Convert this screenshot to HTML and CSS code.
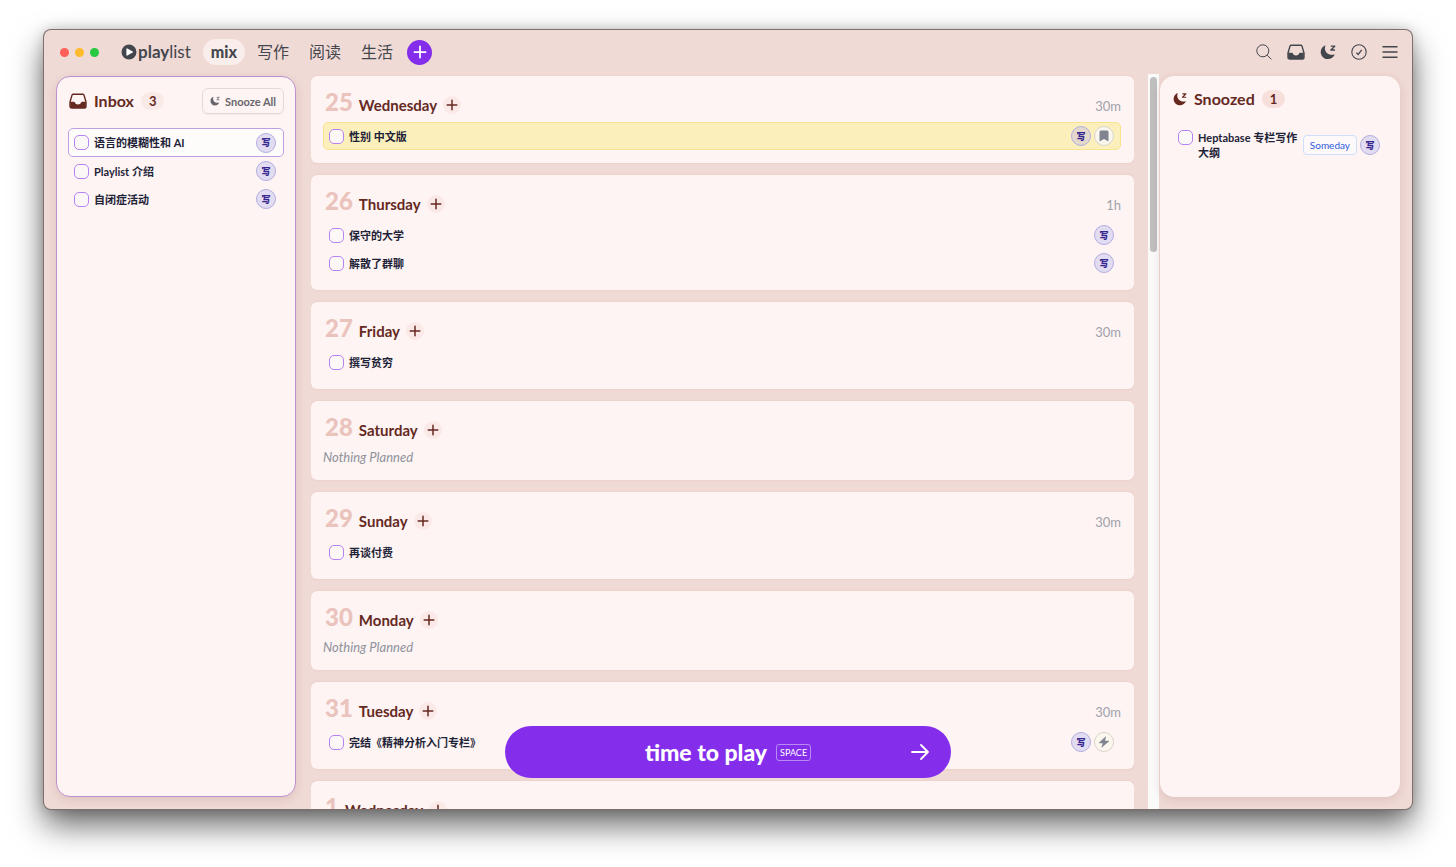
FILE: index.html
```
<!DOCTYPE html>
<html lang="en">
<head>
    <meta charset="UTF-8">
    <meta name="viewport" content="width=device-width, initial-scale=1.0">
    <title>playlist</title>
    <link rel="stylesheet" href="styles.css">
</head>
<body>
    <!-- shared icons -->
    <svg class="sprite" aria-hidden="true">
        <symbol id="i-plus" viewBox="0 0 12 12"><path d="M6 1.200v9.600M1.200 6h9.600" fill="none" stroke="currentColor" stroke-width="1.5" stroke-linecap="round"/></symbol>
        <symbol id="i-inbox" viewBox="0 0 18 16"><path d="M4.2 1.2h9.6c.6 0 1 .3 1.2.9L17 9v4.2c0 1-.7 1.8-1.8 1.8H2.8c-1.1 0-1.8-.8-1.8-1.8V9L3 2.1c.2-.6.6-.9 1.2-.9z" fill="none" stroke="currentColor" stroke-width="1.4" stroke-linejoin="round"/><path d="M1.200 8.800h3.600c.6 0 .9.3 1.100.8.4 1.200 1.500 2 3.100 2s2.700-.8 3.100-2c.2-.5.500-.8 1.100-.8h3.600v4.400c0 1-.6 1.800-1.600 1.800H2.800c-1 0-1.600-.8-1.600-1.800z" fill="currentColor"/></symbol>
        <symbol id="i-moon" viewBox="0 0 16 16"><path d="M5.600 1.200C2.800 2.100.7 4.700.7 7.900c0 4 3.200 7.200 7.200 7.200 3.200 0 5.900-2 6.900-4.900-1 .4-2 .6-3 .6-3.900 0-6.900-2.900-6.900-6.600 0-1 .2-2.100.7-3z" fill="currentColor"/><path d="M10.800 2.200h4l-4 3.800h4.200" fill="none" stroke="currentColor" stroke-width="1.300" stroke-linejoin="round"/></symbol>
        <symbol id="i-bookmark" viewBox="0 0 12 12"><path d="M1.500 2c0-.9.6-1.500 1.500-1.500h6c.9 0 1.500.6 1.500 1.500v9.500L6 9l-4.500 2.500z" fill="currentColor"/></symbol>
        <symbol id="i-bolt" viewBox="0 0 12 12"><path d="M7.600.4L1.200 6.600c-.3.3-.1.700.3.700h3.300l-1.400 4.100c-.1.300.2.400.4.200l7-6.200c.3-.3.1-.7-.3-.7H7L8 .7c.1-.3-.2-.5-.4-.3z" fill="currentColor"/></symbol>
    </svg>

    <div class="app">
        <header class="topbar">
            <div class="dots"><span class="dot red"></span><span class="dot amber"></span><span class="dot green"></span></div>
            <div class="logo">
                <svg class="logo-mark" viewBox="0 0 16 16"><circle cx="8" cy="8" r="7.500" fill="currentColor"/><path d="M6 4.900v6.200L11.400 8z" fill="#fff" stroke="#fff" stroke-width="1.200" stroke-linejoin="round"/></svg><span><b>play</b>list</span>
            </div>
            <nav class="tabs">
                <a href="#" class="tab active">mix</a>
                <a href="#" class="tab">写作</a>
                <a href="#" class="tab">阅读</a>
                <a href="#" class="tab">生活</a>
            </nav>
            <button class="new-list" aria-label="New playlist"><svg class="icon-14"><use href="#i-plus"/></svg></button>
            <div class="tools">
                <button aria-label="Search"><svg viewBox="0 0 16 16"><circle cx="6.800" cy="6.800" r="6" fill="none" stroke="currentColor"/><path d="M11.200 11.200l4.200 4.200" stroke="currentColor"/></svg></button>
                <button aria-label="Inbox"><svg class="wide"><use href="#i-inbox"/></svg></button>
                <button aria-label="Snoozed"><svg><use href="#i-moon"/></svg></button>
                <button aria-label="Completed"><svg viewBox="0 0 16 16"><circle cx="8" cy="8" r="7.200" fill="none" stroke="currentColor" stroke-width="1.100"/><path d="M5.300 8.600l1.900 1.900 3.500-4.700" fill="none" stroke="currentColor" stroke-width="1.300"/></svg></button>
                <button aria-label="Menu"><svg viewBox="0 0 16 16"><path d="M.5 2.700h15M.5 8h15M.5 13.300h15" stroke="currentColor" stroke-width="1.400"/></svg></button>
            </div>
        </header>

        <main class="columns">
            <!-- inbox -->
            <section class="panel inbox">
                <div class="panel-head">
                    <svg class="panel-icon wide"><use href="#i-inbox"/></svg>
                    <h2>Inbox</h2>
                    <span class="count">3</span>
                    <button class="snooze-all"><svg><use href="#i-moon"/></svg>Snooze All</button>
                </div>
                <div class="task selected">
                    <label><input type="checkbox"><span>语言的模糊性和 AI</span></label>
                    <span class="badge">写</span>
                </div>
                <div class="task">
                    <label><input type="checkbox"><span>Playlist 介绍</span></label>
                    <span class="badge">写</span>
                </div>
                <div class="task">
                    <label><input type="checkbox"><span>自闭症活动</span></label>
                    <span class="badge">写</span>
                </div>
            </section>

            <!-- days -->
            <section class="days">
                <article class="day">
                    <div class="day-head"><span class="num">25</span><h3>Wednesday</h3><button class="add" aria-label="Add task"><svg class="icon-12"><use href="#i-plus"/></svg></button><span class="total">30m</span></div>
                    <div class="task marked">
                        <label><input type="checkbox"><span>性别 中文版</span></label>
                        <span class="badge tan">写</span>
                        <span class="badge plain"><svg><use href="#i-bookmark"/></svg></span>
                    </div>
                </article>
                <article class="day">
                    <div class="day-head"><span class="num">26</span><h3>Thursday</h3><button class="add" aria-label="Add task"><svg class="icon-12"><use href="#i-plus"/></svg></button><span class="total">1h</span></div>
                    <div class="task">
                        <label><input type="checkbox"><span>保守的大学</span></label>
                        <span class="badge">写</span>
                    </div>
                    <div class="task">
                        <label><input type="checkbox"><span>解散了群聊</span></label>
                        <span class="badge">写</span>
                    </div>
                </article>
                <article class="day">
                    <div class="day-head"><span class="num">27</span><h3>Friday</h3><button class="add" aria-label="Add task"><svg class="icon-12"><use href="#i-plus"/></svg></button><span class="total">30m</span></div>
                    <div class="task">
                        <label><input type="checkbox"><span>撰写贫穷</span></label>
                    </div>
                </article>
                <article class="day">
                    <div class="day-head"><span class="num">28</span><h3>Saturday</h3><button class="add" aria-label="Add task"><svg class="icon-12"><use href="#i-plus"/></svg></button></div>
                    <p class="nothing">Nothing Planned</p>
                </article>
                <article class="day">
                    <div class="day-head"><span class="num">29</span><h3>Sunday</h3><button class="add" aria-label="Add task"><svg class="icon-12"><use href="#i-plus"/></svg></button><span class="total">30m</span></div>
                    <div class="task">
                        <label><input type="checkbox"><span>再谈付费</span></label>
                    </div>
                </article>
                <article class="day">
                    <div class="day-head"><span class="num">30</span><h3>Monday</h3><button class="add" aria-label="Add task"><svg class="icon-12"><use href="#i-plus"/></svg></button></div>
                    <p class="nothing">Nothing Planned</p>
                </article>
                <article class="day">
                    <div class="day-head"><span class="num">31</span><h3>Tuesday</h3><button class="add" aria-label="Add task"><svg class="icon-12"><use href="#i-plus"/></svg></button><span class="total">30m</span></div>
                    <div class="task">
                        <label><input type="checkbox"><span>完结《精神分析入门专栏》</span></label>
                        <span class="badge">写</span>
                        <span class="badge plain"><svg><use href="#i-bolt"/></svg></span>
                    </div>
                </article>
                <article class="day">
                    <div class="day-head"><span class="num">1</span><h3>Wednesday</h3><button class="add" aria-label="Add task"><svg class="icon-12"><use href="#i-plus"/></svg></button></div>
                </article>
            </section>

            <div class="scroll-track"><div class="scroll-thumb"></div></div>

            <!-- snoozed -->
            <section class="panel snoozed">
                <div class="panel-head">
                    <svg class="panel-icon"><use href="#i-moon"/></svg>
                    <h2>Snoozed</h2>
                    <span class="count strong">1</span>
                </div>
                <div class="task tall">
                    <label><input type="checkbox"><span>Heptabase 专栏写作大纲</span></label>
                    <span class="someday">Someday</span>
                    <span class="badge">写</span>
                </div>
            </section>
        </main>

        <button class="play">
            <span class="play-label">time to play</span>
            <kbd>SPACE</kbd>
            <svg class="arrow" viewBox="0 0 18 18"><path d="M1 9h16M10 2l7 7-7 7" fill="none" stroke="currentColor" stroke-width="1.800" stroke-linecap="round" stroke-linejoin="round"/></svg>
        </button>
    </div>
</body>
</html>
```
FILE: styles.css
```
* {
    box-sizing: border-box;
}

body {
    margin: 0;
    background: #fff;
    color: #1f2338;
    font-family: Lato, "Noto Sans CJK SC", sans-serif;
    font-size: 11px;
    overflow: hidden;
}

button {
    font-family: inherit;
    border: 0;
    padding: 0;
    background: none;
    color: inherit;
    cursor: pointer;
}

h2,
h3,
p {
    margin: 0;
}

svg {
    display: block;
    width: 16px;
    height: 16px;
    flex: none;
}

svg.wide {
    width: 18px;
}

svg.icon-12 {
    width: 12px;
    height: 12px;
}

svg.icon-14 {
    width: 14px;
    height: 14px;
}

svg.sprite {
    position: absolute;
    width: 0;
    height: 0;
}

/* window */
.app {
    position: relative;
    display: flex;
    flex-direction: column;
    height: calc(100vh - 88px);
    margin: 30px 44px 58px;
    background: #f0dad6;
    border-radius: 7px;
    overflow: hidden;
    box-shadow: 0 0 0 1px #7c706e, 0 16px 32px rgba(0, 0, 0, 0.6), 0 0 14px rgba(0, 0, 0, 0.2);
}

/* top bar */
.topbar {
    display: flex;
    align-items: center;
    flex: none;
    height: 44px;
    padding: 0 14px 0 16px;
    color: #44464d;
}

.dots {
    display: flex;
    gap: 6px;
}

.dot {
    width: 9px;
    height: 9px;
    border-radius: 50%;
}

.red {
    background: #fe5f57;
}

.amber {
    background: #febb2e;
}

.green {
    background: #28c840;
}

.logo {
    display: flex;
    align-items: center;
    gap: 1px;
    margin-left: 22px;
    font-size: 17px;
    line-height: 22px;
}

.tabs {
    display: flex;
    align-items: center;
    gap: 4px;
    margin-left: 12px;
}

.tab {
    padding: 0 8px;
    border-radius: 13px;
    color: inherit;
    font-size: 16px;
    line-height: 26px;
    text-decoration: none;
}

.tab.active {
    background: #f9eeec;
    font-weight: 900;
}

.new-list {
    display: flex;
    align-items: center;
    justify-content: center;
    width: 25px;
    height: 25px;
    margin-left: 6px;
    border-radius: 50%;
    background: #842eeb;
    color: #fff;
}

.tools {
    display: flex;
    gap: 15px;
    margin-left: auto;
}

/* columns */
.columns {
    display: flex;
    flex: 1;
    min-height: 0;
    padding: 0 12px;
}

.panel {
    flex: none;
    width: 240px;
    margin: 2px 0 12px;
    padding: 10px 11px;
    background: #fdf4f3;
    border: 1px solid #fdf4f3;
    border-radius: 14px;
    box-shadow: 0 3px 10px rgba(120, 60, 50, 0.14);
}

.inbox {
    border-color: #bd92cf;
}

.snoozed {
    margin-left: 1px;
}

.panel-head {
    display: flex;
    align-items: center;
    height: 28px;
    margin-bottom: 13px;
    padding-left: 1px;
    color: #65291f;
}

.snoozed .panel-head {
    height: 24px;
    margin-bottom: 16px;
}

h2 {
    margin-left: 7px;
    font-size: 16px;
    line-height: 20px;
}

.snoozed svg {
    width: 14px;
    height: 14px;
}

.count {
    margin-left: 7px;
    padding: 0 8px;
    border-radius: 9px;
    background: #f9e9e7;
    font-size: 13px;
    font-weight: 700;
    line-height: 18px;
}

.count.strong {
    background: #f7e0dc;
}

.snooze-all {
    display: flex;
    align-items: center;
    gap: 5px;
    height: 26px;
    margin-left: auto;
    padding: 0 7px;
    border: 1px solid #e3d9d9;
    border-radius: 6px;
    color: #68666c;
    font-size: 11px;
    font-weight: 700;
    box-shadow: 0 1px 1px rgba(0, 0, 0, 0.05);
}

.snooze-all svg {
    width: 10px;
    height: 10px;
}

/* tasks */
.task {
    display: flex;
    align-items: center;
    gap: 3px;
    height: 28px;
    padding: 0 6px 0 5px;
    border: 1px solid transparent;
    border-radius: 5px;
}

.inbox .task {
    padding-right: 7px;
}

.task label {
    display: flex;
    align-items: center;
    gap: 5px;
    flex: 1;
    font-weight: 700;
    line-height: 15px;
}

.task input {
    appearance: none;
    flex: none;
    width: 15px;
    height: 15px;
    margin: 0;
    border: 1px solid #b583f3;
    border-radius: 5px;
    background: #fdf8f8;
}

.task.selected {
    height: 29px;
    border-color: #bfa0e2;
    background: #fefbfb;
}

.task.marked {
    background: #fbf0bb;
    border-color: #fae48c;
}

.task.tall {
    height: 36px;
    padding-right: 7px;
}

.task.tall label {
    align-items: flex-start;
}

.badge {
    display: flex;
    align-items: center;
    justify-content: center;
    flex: none;
    width: 20px;
    height: 20px;
    border: 1px solid #b3addf;
    border-radius: 50%;
    background: #e2dcf2;
    color: #36268f;
    font-size: 9px;
    font-weight: 900;
}

.badge.tan {
    background: #e4d8cc;
}

.badge.plain {
    background: #fbf6ee;
    border-color: #d9d3cc;
    color: #7f8490;
}

.badge svg {
    width: 12px;
    height: 12px;
}

.someday {
    flex: none;
    padding: 0 6px;
    border: 1px solid #cddffb;
    border-radius: 4px;
    background: #fdf9fb;
    color: #2f5bdc;
    font-size: 10px;
    line-height: 18px;
}

/* day cards */
.days {
    display: flex;
    flex: 1;
    flex-direction: column;
    gap: 12px;
    min-width: 0;
    margin: 0 14px 0 15px;
    padding-top: 2px;
    overflow: hidden;
}

.day {
    flex: none;
    padding: 12px 13px 13px 12px;
    border-radius: 6px;
    background: #fdf4f3;
    box-shadow: 0 0 2px #e9bdb6;
}

.day-head {
    display: flex;
    align-items: baseline;
    height: 34px;
    padding-left: 2px;
    color: #65291f;
}

.num {
    color: #eac3bc;
    font-size: 24px;
    font-weight: 900;
    line-height: 28px;
}

h3 {
    margin-left: 6px;
    font-size: 15px;
    line-height: 20px;
}

.add {
    display: flex;
    align-items: center;
    justify-content: center;
    align-self: flex-start;
    width: 18px;
    height: 18px;
    margin: 8px 0 0 6px;
    border-radius: 50%;
    background: #fae9e7;
}

.total {
    margin-left: auto;
    color: #a0a1aa;
    font-size: 13px;
}

.nothing {
    color: #8f929b;
    font-size: 13px;
    font-style: italic;
    line-height: 20px;
}

.scroll-track {
    flex: none;
    width: 11px;
    padding: 3px 2px;
    background: #fafafa;
}

.scroll-thumb {
    height: 24%;
    border-radius: 4px;
    background: #bfbfbf;
}

/* play button, floats over the day list */
.play {
    position: absolute;
    bottom: 31px;
    left: 50%;
    display: flex;
    align-items: center;
    justify-content: center;
    gap: 9px;
    width: 446px;
    height: 52px;
    margin-left: -223px;
    border-radius: 26px;
    background: #842eeb;
    color: #fff;
}

.play-label {
    font-size: 23px;
    font-weight: 900;
}

.play kbd {
    padding: 0 3px;
    border: 1px solid #b98af3;
    border-radius: 3px;
    font-family: inherit;
    font-size: 9px;
    line-height: 15px;
}

.arrow {
    position: absolute;
    right: 22px;
    width: 18px;
    height: 18px;
}
```
